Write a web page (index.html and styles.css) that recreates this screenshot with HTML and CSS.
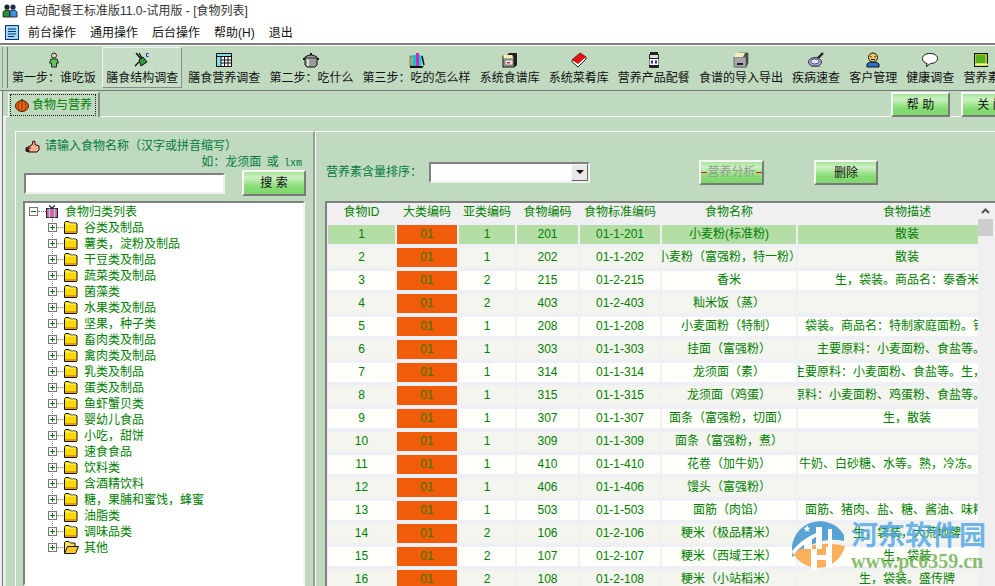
FILE: index.html
```html
<!DOCTYPE html>
<html lang="zh-CN">
<head>
<meta charset="utf-8">
<title>自动配餐王标准版11.0-试用版</title>
<link rel="stylesheet" href="styles.css">
</head>
<body>
<svg class="defs" width="0" height="0" aria-hidden="true">
  <symbol id="folder" viewBox="0 0 15 14"><path d="M1.5 3.5V2.5L2.5 1.5H6L7.5 3H13L14 4V13L13.5 13.5H1.5Z" fill="#ffd800" stroke="#111"/><path d="M2 4H13" stroke="#fff6a0"/><path d="M2 11H13V13H2Z" fill="#e89a00"/></symbol>
  <symbol id="folder-open" viewBox="0 0 16 14"><path d="M1.5 13V2.5L2.5 1.5H6L7.5 3H12V6" fill="#ffe050" stroke="#111"/><path d="M1.5 13.5L4.5 6.5H15.5L12.5 13.5Z" fill="#ffc820" stroke="#111"/></symbol>
  <symbol id="plus" viewBox="0 0 9 9"><rect x=".5" y=".5" width="8" height="8" fill="#fff" stroke="#777"/><path d="M2 4.5H7M4.5 2V7" stroke="#008000"/></symbol>
  <symbol id="minus" viewBox="0 0 9 9"><rect x=".5" y=".5" width="8" height="8" fill="#fff" stroke="#777"/><path d="M2 4.5H7" stroke="#008000"/></symbol>
</svg>
<div class="app">
  <header class="titlebar">
    <svg class="ico16" viewBox="0 0 16 16"><circle cx="5" cy="4" r="2.6" fill="#222"/><circle cx="11" cy="4" r="2.6" fill="#1c2c50"/><path d="M1 14V9L3 7H7L8 9V14Z" fill="#2e8b3d" stroke="#111" stroke-width=".8"/><path d="M8 14V9L9 7H13L15 9V14Z" fill="#3f8fe0" stroke="#111" stroke-width=".8"/></svg>
    <span>自动配餐王标准版11.0-试用版 - [食物列表]</span>
  </header>
  <nav class="menubar">
    <svg class="menu-doc" viewBox="0 0 14 15"><rect x=".5" y=".5" width="13" height="14" fill="#9bd7f5" stroke="#10307a"/><path d="M3 4H11M3 6.5H11M3 9H11M3 11.5H9" stroke="#10307a"/></svg>
    <span>前台操作</span><span>通用操作</span><span>后台操作</span><span>帮助(H)</span><span>退出</span>
  </nav>
  <div class="toolbar">
    <div class="grip"></div>
    <div class="tool tool-first"><svg class="ico16" viewBox="0 0 16 16"><circle cx="8" cy="3.5" r="2.5" fill="#e8d8a0" stroke="#222"/><path d="M5 7H11L12.5 11H10.5V15H5.5V11H3.5Z" fill="#5fc35f" stroke="#222"/></svg><span>第一步：谁吃饭</span></div>
    <div class="tool tool-on"><svg class="ico16" viewBox="0 0 16 16"><path d="M2 1L7 7M5 1L8 6" stroke="#111" stroke-width="1.4"/><path d="M5 8L9 5L13 10L7 14Z" fill="#2f9a3a" stroke="#111"/><path d="M1 14L5 10" stroke="#111" stroke-width="1.4"/><path d="M14.5 1.5H12.5V4.5H14.5" fill="none" stroke="#2233cc"/></svg><span>膳食结构调查</span></div>
    <div class="tool"><svg class="ico16" viewBox="0 0 16 16"><rect x=".5" y="1.5" width="15" height="13" fill="#7fe0e8" stroke="#111"/><rect x="5" y="5" width="10" height="9" fill="#fff"/><path d="M.5 1.5H15.5V4.5H.5ZM5 5V14M8.5 5V14M12 5V14M5 8H15M5 11H15" fill="none" stroke="#111"/></svg><span>膳食营养调查</span></div>
    <div class="tool"><svg class="ico16" viewBox="0 0 16 16"><path d="M2 5Q8 1 14 5V13L12 15H4L2 13Z" fill="#9a9a9a" stroke="#111"/><path d="M2 6H14" stroke="#333"/><path d="M5 7V14" stroke="#ddd" stroke-width="2"/><rect x="7" y="1" width="2" height="2" fill="#111"/><path d="M0 7H2M14 7H16" stroke="#111" stroke-width="2"/></svg><span>第二步：吃什么</span></div>
    <div class="tool"><svg class="ico16" viewBox="0 0 16 16"><path d="M1 14H15L13 16H1Z" fill="#111"/><rect x="1" y="4" width="2" height="10" fill="#d8d860" stroke="#111" stroke-width=".5"/><rect x="4" y="3" width="3" height="11" fill="#00c8d8"/><rect x="7" y="1" width="3" height="13" fill="#e020b0"/><rect x="10" y="3" width="2.500" height="11" fill="#00d8e0"/><path d="M13 4L15 13" stroke="#111" stroke-width="1.500"/></svg><span>第三步：吃的怎么样</span></div>
    <div class="tool"><svg class="ico16" viewBox="0 0 16 16"><path d="M4 4L7 1H15V13L13 15Z" fill="#222"/><rect x="1" y="4" width="11" height="11" fill="#a9a9a0" stroke="#111"/><rect x="1.500" y="3" width="9" height="3" fill="#f4f0b0"/><rect x="3" y="8" width="8" height="5" fill="#e8e8d0" stroke="#333" stroke-width=".5"/><rect x="5" y="10" width="3" height="1.500" fill="#d02080"/></svg><span>系统食谱库</span></div>
    <div class="tool"><svg class="ico16" viewBox="0 0 16 16"><path d="M1 8L9 1L15 5V7L7 15L1 10Z" fill="#fff" stroke="#222"/><path d="M1 8L9 1L15 5L7 12Z" fill="#e01010"/></svg><span>系统菜肴库</span></div>
    <div class="tool"><svg class="ico16" viewBox="0 0 16 16"><rect x="4" y="0" width="8" height="3" fill="#222"/><rect x="3" y="2" width="10" height="14" rx="1" fill="#222"/><rect x="4" y="3" width="8" height="3" fill="#ddd"/><rect x="3.500" y="7" width="9" height="6" fill="#f4f4f4"/><rect x="5" y="8.500" width="2" height="3" fill="#30308a"/><rect x="9" y="8.500" width="2" height="3" fill="#30308a"/></svg><span>营养产品配餐</span></div>
    <div class="tool"><svg class="ico16" viewBox="0 0 16 16"><path d="M3 4L6 1H15V11L13 15H3Z" fill="#555" stroke="#222" stroke-width=".5"/><rect x="1" y="5" width="12" height="10" fill="#a8a8a8" stroke="#444" stroke-width=".6"/><path d="M3 1H12L10 5H1Z" fill="#f4f0c0"/><rect x="4" y="11" width="6" height="2" fill="#222"/></svg><span>食谱的导入导出</span></div>
    <div class="tool"><svg class="ico16" viewBox="0 0 16 16"><path d="M9 7L15 1" stroke="#222" stroke-width="2.400"/><ellipse cx="7" cy="10" rx="6.500" ry="4.500" fill="#a8a8e0" stroke="#334"/><ellipse cx="7" cy="9.500" rx="4" ry="2.500" fill="#e8e8f8" stroke="#556"/><path d="M3 14H12" stroke="#667" stroke-width="1.500"/></svg><span>疾病速查</span></div>
    <div class="tool"><svg class="ico16" viewBox="0 0 16 16"><path d="M2 15V12L5 10H11L14 12V15Z" fill="#2a70d0" stroke="#111"/><circle cx="8" cy="5.500" r="4.500" fill="#f4c860" stroke="#111"/><path d="M6 4V5.500M10 4V5.500M6 7.500H10" stroke="#111"/></svg><span>客户管理</span></div>
    <div class="tool"><svg class="ico16" viewBox="0 0 16 16"><path d="M8 1.500C3.500 1.500 .5 3.500 .5 6.500S3 11 5 11.500L4.500 14.500L8.500 11.500C12.500 11.500 15.500 9.500 15.500 6.500S12.500 1.500 8 1.500Z" fill="#fff" stroke="#111"/></svg><span>健康调查</span></div>
    <div class="tool"><svg class="ico16" viewBox="0 0 16 16"><rect x="1.500" y="1.500" width="13" height="13" fill="#a8c818" stroke="#111"/><rect x="3" y="3" width="9" height="8" fill="#58b020"/><path d="M2 12.500H15" stroke="#f4f0a0" stroke-width="2"/></svg><span>营养素</span></div>
  </div>
  <div class="stage">
    <div class="tabarea">
      <div class="tabstrip">
        <div class="tab"><div class="tab-focus">
          <svg class="pumpkin" viewBox="0 0 14 14"><path d="M7 1V3" stroke="#2b6b1a" stroke-width="2"/><ellipse cx="7" cy="8" rx="6.500" ry="5.500" fill="#e8660e" stroke="#4a2000"/><path d="M7 3V13M4 4Q2 8 4 13M10 4Q12 8 10 13" stroke="#8a3500" fill="none"/></svg>
          <span>食物与营养</span>
        </div></div>
        <button class="gbtn help">帮 助</button>
        <button class="gbtn close">关 闭</button>
      </div>
      <div class="workspace">
        <section class="left">
          <div class="hint"><svg class="hand" viewBox="0 0 15 13"><path d="M1 8L7 5L8 1L10 1.500L10 4.500L14 6V10L12 12H4L1 11Z" fill="#f4b090" stroke="#300"/><path d="M1 8H6M1 11H5" stroke="#300"/><rect x="1" y="8.500" width="3" height="3.500" fill="#222"/></svg><span>请输入食物名称（汉字或拼音缩写）</span></div>
          <div class="hint2">如：龙须面 或 <span class="mono">lxm</span></div>
          <div class="search-row">
            <input class="search-input" type="text" value="">
            <button class="gbtn search">搜 索</button>
          </div>
          <div class="tree">
            <div class="root">
              <svg class="box" viewBox="0 0 9 9"><use href="#minus"/></svg><i class="stub stub-root"></i>
              <svg class="gift" viewBox="0 0 12 13"><rect x=".5" y="3.500" width="11" height="9" fill="#f050a0" stroke="#222"/><path d="M3.500 3.500V12.500M8.500 3.500V12.500" stroke="#80e0e0" stroke-width="1.500"/><path d="M6 3L3 .5M6 3L9 .5" stroke="#222" stroke-width="1.200"/></svg>
              <span>食物归类列表</span>
            </div>
            <div class="node"><svg class="box" viewBox="0 0 9 9"><use href="#plus"/></svg><i class="stub"></i><svg class="folder" viewBox="0 0 15 14"><use href="#folder"/></svg><span>谷类及制品</span></div>
            <div class="node"><svg class="box" viewBox="0 0 9 9"><use href="#plus"/></svg><i class="stub"></i><svg class="folder" viewBox="0 0 15 14"><use href="#folder"/></svg><span>薯类，淀粉及制品</span></div>
            <div class="node"><svg class="box" viewBox="0 0 9 9"><use href="#plus"/></svg><i class="stub"></i><svg class="folder" viewBox="0 0 15 14"><use href="#folder"/></svg><span>干豆类及制品</span></div>
            <div class="node"><svg class="box" viewBox="0 0 9 9"><use href="#plus"/></svg><i class="stub"></i><svg class="folder" viewBox="0 0 15 14"><use href="#folder"/></svg><span>蔬菜类及制品</span></div>
            <div class="node"><svg class="box" viewBox="0 0 9 9"><use href="#plus"/></svg><i class="stub"></i><svg class="folder" viewBox="0 0 15 14"><use href="#folder"/></svg><span>菌藻类</span></div>
            <div class="node"><svg class="box" viewBox="0 0 9 9"><use href="#plus"/></svg><i class="stub"></i><svg class="folder" viewBox="0 0 15 14"><use href="#folder"/></svg><span>水果类及制品</span></div>
            <div class="node"><svg class="box" viewBox="0 0 9 9"><use href="#plus"/></svg><i class="stub"></i><svg class="folder" viewBox="0 0 15 14"><use href="#folder"/></svg><span>坚果，种子类</span></div>
            <div class="node"><svg class="box" viewBox="0 0 9 9"><use href="#plus"/></svg><i class="stub"></i><svg class="folder" viewBox="0 0 15 14"><use href="#folder"/></svg><span>畜肉类及制品</span></div>
            <div class="node"><svg class="box" viewBox="0 0 9 9"><use href="#plus"/></svg><i class="stub"></i><svg class="folder" viewBox="0 0 15 14"><use href="#folder"/></svg><span>禽肉类及制品</span></div>
            <div class="node"><svg class="box" viewBox="0 0 9 9"><use href="#plus"/></svg><i class="stub"></i><svg class="folder" viewBox="0 0 15 14"><use href="#folder"/></svg><span>乳类及制品</span></div>
            <div class="node"><svg class="box" viewBox="0 0 9 9"><use href="#plus"/></svg><i class="stub"></i><svg class="folder" viewBox="0 0 15 14"><use href="#folder"/></svg><span>蛋类及制品</span></div>
            <div class="node"><svg class="box" viewBox="0 0 9 9"><use href="#plus"/></svg><i class="stub"></i><svg class="folder" viewBox="0 0 15 14"><use href="#folder"/></svg><span>鱼虾蟹贝类</span></div>
            <div class="node"><svg class="box" viewBox="0 0 9 9"><use href="#plus"/></svg><i class="stub"></i><svg class="folder" viewBox="0 0 15 14"><use href="#folder"/></svg><span>婴幼儿食品</span></div>
            <div class="node"><svg class="box" viewBox="0 0 9 9"><use href="#plus"/></svg><i class="stub"></i><svg class="folder" viewBox="0 0 15 14"><use href="#folder"/></svg><span>小吃，甜饼</span></div>
            <div class="node"><svg class="box" viewBox="0 0 9 9"><use href="#plus"/></svg><i class="stub"></i><svg class="folder" viewBox="0 0 15 14"><use href="#folder"/></svg><span>速食食品</span></div>
            <div class="node"><svg class="box" viewBox="0 0 9 9"><use href="#plus"/></svg><i class="stub"></i><svg class="folder" viewBox="0 0 15 14"><use href="#folder"/></svg><span>饮料类</span></div>
            <div class="node"><svg class="box" viewBox="0 0 9 9"><use href="#plus"/></svg><i class="stub"></i><svg class="folder" viewBox="0 0 15 14"><use href="#folder"/></svg><span>含酒精饮料</span></div>
            <div class="node"><svg class="box" viewBox="0 0 9 9"><use href="#plus"/></svg><i class="stub"></i><svg class="folder" viewBox="0 0 15 14"><use href="#folder"/></svg><span>糖，果脯和蜜饯，蜂蜜</span></div>
            <div class="node"><svg class="box" viewBox="0 0 9 9"><use href="#plus"/></svg><i class="stub"></i><svg class="folder" viewBox="0 0 15 14"><use href="#folder"/></svg><span>油脂类</span></div>
            <div class="node"><svg class="box" viewBox="0 0 9 9"><use href="#plus"/></svg><i class="stub"></i><svg class="folder" viewBox="0 0 15 14"><use href="#folder"/></svg><span>调味品类</span></div>
            <div class="node node-last"><svg class="box" viewBox="0 0 9 9"><use href="#plus"/></svg><i class="stub"></i><svg class="folder-o" viewBox="0 0 16 14"><use href="#folder-open"/></svg><span>其他</span></div>
          </div>
        </section>
        <section class="right">
          <div class="controls">
            <label class="sort-label">营养素含量排序：</label>
            <div class="combo"><div class="combo-arrow"><i></i></div></div>
            <button class="gbtn analyse" disabled>营养分析</button>
            <button class="gbtn del">删除</button>
          </div>
          <div class="table-wrap">
            <div class="grid-view">
              <div class="grid">
                <div class="row head"><div>食物ID</div><div>大类编码</div><div>亚类编码</div><div>食物编码</div><div>食物标准编码</div><div>食物名称</div><div>食物描述</div></div>
                <div class="row sel"><div>1</div><div class="cat">01</div><div>1</div><div>201</div><div>01-1-201</div><div>小麦粉(标准粉)</div><div>散装</div></div>
                <div class="row alt"><div>2</div><div class="cat">01</div><div>1</div><div>202</div><div>01-1-202</div><div><span>小麦粉（富强粉，特一粉）</span></div><div>散装</div></div>
                <div class="row"><div>3</div><div class="cat">01</div><div>2</div><div>215</div><div>01-2-215</div><div>香米</div><div><span>生，袋装。商品名：泰香米</span></div></div>
                <div class="row alt"><div>4</div><div class="cat">01</div><div>2</div><div>403</div><div>01-2-403</div><div>籼米饭（蒸）</div><div></div></div>
                <div class="row"><div>5</div><div class="cat">01</div><div>1</div><div>208</div><div>01-1-208</div><div>小麦面粉（特制）</div><div><span>袋装。商品名：特制家庭面粉。钱塘牌</span></div></div>
                <div class="row alt"><div>6</div><div class="cat">01</div><div>1</div><div>303</div><div>01-1-303</div><div>挂面（富强粉）</div><div><span>主要原料：小麦面粉、食盐等。生</span></div></div>
                <div class="row"><div>7</div><div class="cat">01</div><div>1</div><div>314</div><div>01-1-314</div><div>龙须面（素）</div><div><span>主要原料：小麦面粉、食盐等。生，袋装。</span></div></div>
                <div class="row alt"><div>8</div><div class="cat">01</div><div>1</div><div>315</div><div>01-1-315</div><div>龙须面（鸡蛋）</div><div><span>主要原料：小麦面粉、鸡蛋粉、食盐等。生，袋装。</span></div></div>
                <div class="row"><div>9</div><div class="cat">01</div><div>1</div><div>307</div><div>01-1-307</div><div>面条（富强粉，切面）</div><div>生，散装</div></div>
                <div class="row alt"><div>10</div><div class="cat">01</div><div>1</div><div>309</div><div>01-1-309</div><div>面条（富强粉，煮）</div><div></div></div>
                <div class="row"><div>11</div><div class="cat">01</div><div>1</div><div>410</div><div>01-1-410</div><div>花卷（加牛奶）</div><div><span>牛奶、白砂糖、水等。熟，冷冻。散装。</span></div></div>
                <div class="row alt"><div>12</div><div class="cat">01</div><div>1</div><div>406</div><div>01-1-406</div><div>馒头（富强粉）</div><div></div></div>
                <div class="row"><div>13</div><div class="cat">01</div><div>1</div><div>503</div><div>01-1-503</div><div>面筋（肉馅）</div><div><span>主要原料：面筋、猪肉、盐、糖、酱油、味精等。熟，冷冻。</span></div></div>
                <div class="row alt"><div>14</div><div class="cat">01</div><div>2</div><div>106</div><div>01-2-106</div><div>粳米（极品精米）</div><div>生，袋装，大荒地牌</div></div>
                <div class="row"><div>15</div><div class="cat">01</div><div>2</div><div>107</div><div>01-2-107</div><div>粳米（西域王米）</div><div>生，袋装</div></div>
                <div class="row alt"><div>16</div><div class="cat">01</div><div>2</div><div>108</div><div>01-2-108</div><div>粳米（小站稻米）</div><div>生，袋装。盛传牌</div></div>
              </div>
            </div>
            <div class="scrollbar">
              <div class="sb-up"><svg width="9" height="6" viewBox="0 0 9 6"><path d="M1 5L4.500 1.500L8 5" fill="none" stroke="#555" stroke-width="2"/></svg></div>
              <div class="sb-thumb"></div>
            </div>
          </div>
        </section>
      </div>
    </div>
  </div>
  <div class="watermark">
    <svg class="wm-logo" viewBox="0 0 56 56">
      <path d="M2 32A28 28 0 0 1 54 20L54 26Q30 20 2 42Z" fill="#4b9bd2"/>
      <path d="M3 38Q28 24 55 31A28 28 0 0 1 3 38Z" fill="#f9a94f"/>
      <path d="M2 36Q12 24 26 18V22Q14 28 3 40Z" fill="#fff"/>
      <path d="M14 28L22 20V34H14ZM26 12H32V34H26ZM38 14H42V32H38Z" fill="#fff"/>
      <path d="M21 34H27V56H21ZM36 32H42V53H36ZM24 40H38V45H24Z" fill="#fff"/>
      <path d="M17 10L18 12.500L20.500 13L18.500 14.500L19 17L17 15.500L15 17L15.500 14.500L13.500 13L16 12.500Z" fill="#fff"/>
    </svg>
    <div class="wm-text">
      <div class="wm-cn">河东软件园</div>
      <div class="wm-url">www.pc0359.cn</div>
    </div>
  </div>
</div>
</body>
</html>
```

FILE: styles.css
```css
* { box-sizing: border-box; }
html, body { margin: 0; padding: 0; }
body {
  width: 995px;
  height: 586px;
  overflow: hidden;
  background: #c0dac0;
  font: 12px/14px "Liberation Sans", "Noto Sans CJK SC", sans-serif;
  color: #111;
}
.defs { position: absolute; }
.app {
  position: relative;
  display: flex;
  flex-direction: column;
  width: 995px;
  height: 586px;
  overflow: hidden;
}
.ico16 { width: 16px; height: 16px; display: block; flex: none; }

.titlebar {
  flex: none;
  height: 22px;
  background: #fff;
  display: flex;
  align-items: center;
  padding-left: 2px;
  gap: 6px;
  color: #333;
}
.menubar {
  flex: none;
  height: 21px;
  background: #fff;
  display: flex;
  align-items: center;
  padding-left: 5px;
  gap: 14px;
  color: #111;
}
.menu-doc { width: 14px; height: 15px; margin-right: -5px; }

.toolbar {
  flex: none;
  height: 48px;
  display: flex;
  align-items: flex-start;
  gap: 9.1px;
  padding: 2px 0 0 2px;
  background: #c0dac0;
  border-top: 2px solid #7e7e7e;
  box-shadow: inset 0 1px 0 #fff;
  border-bottom: 1px solid #777;
  overflow: hidden;
  white-space: nowrap;
}
.grip {
  flex: none;
  width: 6px;
  height: 41px;
  margin-right: -6px;
  border-left: 1px solid #9a9a9a;
  border-right: 1px solid #777;
}
.tool {
  flex: none;
  height: 41px;
  border: 1px solid transparent;
  padding-top: 4px;
  display: flex;
  flex-direction: column;
  align-items: center;
  gap: 3px;
  margin: 0 -1px;
}
.tool-first { margin-left: 0; }
.tool-on {
  padding-left: 3px;
  padding-right: 3px;
  margin: 0 -3px;
  background: #c6dec6;
  border-color: #f4f4f4 #8a8a8a #8a8a8a #f4f4f4;
}

.stage { flex: 1; min-height: 0; display: flex; background: #e9eee9; padding-left: 2px; }
.tabarea {
  flex: 1;
  min-width: 0;
  display: flex;
  flex-direction: column;
  border-left: 1px solid #777;
  background: #c0dac0;
}
.tabstrip {
  flex: none;
  height: 26px;
  display: flex;
  align-items: flex-start;
  padding: 1px 0 0 5px;
  border-bottom: 1px solid #fff;
}
.tab {
  flex: none;
  width: 92px;
  height: 25px;
  padding: 1px 2px 1px 1px;
  background: #c0dac0;
  border-top: 1px solid #e8f0e8;
  border-left: 1px solid #f4f4f4;
  border-right: 2px solid #888;
  position: relative;
  z-index: 1;
}
.tab-focus {
  height: 100%;
  border: 1px dotted #222;
  display: flex;
  align-items: center;
  padding-left: 4px;
  gap: 3px;
  color: #008000;
}
.pumpkin { width: 14px; height: 14px; flex: none; }

.gbtn {
  font: 12px/14px "Liberation Sans", "Noto Sans CJK SC", sans-serif;
  color: #111;
  padding: 0;
  border: 2px solid;
  border-color: #f6f6f6 #7a7a7a #7a7a7a #f6f6f6;
  background: linear-gradient(#a7e59b 0, #cdf0c4 25%, #a4e696 48%, #84dc73 70%, #7ed66c 100%);
}
.help { width: 59px; height: 25px; margin-left: auto; }
.close { width: 60px; height: 25px; margin-left: 11px; margin-right: -26px; flex: none; }

.workspace {
  flex: 1;
  min-height: 0;
  display: flex;
  padding: 14px 0 0 9px;
  border-left: 3px solid #ececec;
}
.left {
  flex: none;
  width: 300px;
  display: flex;
  flex-direction: column;
  padding: 7px 8px 0 7px;
  border-top: 1px solid #fff;
  border-left: 1px solid #fff;
  border-right: 2px solid #9d9d9d;
  color: #007a3a;
}
.hint { display: flex; align-items: center; gap: 5px; height: 14px; margin-left: 2px; }
.hand { width: 15px; height: 13px; flex: none; }
.hint2 { text-align: right; height: 14px; margin: 2px 3px 0 0; word-spacing: 2px; }
.mono { font: 10px/14px "Liberation Mono", monospace; }
.search-row { display: flex; align-items: center; height: 26px; margin: 1px -1px 0 1px; gap: 17px; }
.search-input {
  width: 201px;
  height: 21px;
  padding: 0;
  background: #fff;
  border: 2px solid;
  border-color: #808080 #f0f0f0 #f0f0f0 #808080;
  outline: none;
}
.search { flex: none; width: 64px; height: 26px; }
.tree {
  flex: 1;
  min-height: 0;
  margin-top: 5px;
  background: #fff;
  border: 2px solid;
  border-color: #808080 #f4f4f4 transparent #808080;
  color: #008000;
  overflow: hidden;
}
.root, .node {
  display: flex;
  align-items: center;
  height: 16px;
  line-height: 16px;
  white-space: nowrap;
}
.root > span, .node > span { margin-top: 2px; }
.root { padding-left: 4px; }
.node {
  padding-left: 23px;
  background: repeating-linear-gradient(#808080 0 1px, transparent 1px 2px) 27px 0 / 1px 100% no-repeat;
}
.node-last { background-size: 1px 8px; }
.box { width: 9px; height: 9px; flex: none; display: block; }
.stub { flex: none; width: 6px; border-top: 1px dotted #808080; }
.stub-root { width: 8px; }
.gift { width: 12px; height: 13px; flex: none; margin-right: 7px; }
.folder { width: 15px; height: 14px; flex: none; margin-right: 6px; }
.folder-o { width: 16px; height: 14px; flex: none; margin-right: 5px; }

.right {
  flex: 1;
  min-width: 0;
  display: flex;
  flex-direction: column;
  border-top: 1px solid #fff;
  border-left: 1px solid #fff;
}
.controls {
  flex: none;
  height: 69px;
  padding: 27px 0 16px 10px;
  display: flex;
  align-items: center;
}
.sort-label { width: 103px; flex: none; color: #007a3a; }
.combo {
  flex: none;
  width: 161px;
  height: 21px;
  background: #fff;
  border: 2px solid;
  border-color: #808080 #f0f0f0 #f0f0f0 #808080;
  display: flex;
  justify-content: flex-end;
}
.combo-arrow {
  width: 17px;
  height: 17px;
  background: #e8e8e8;
  border: 1px solid;
  border-color: #f8f8f8 #666 #666 #f8f8f8;
  display: flex;
  align-items: center;
  justify-content: center;
}
.combo-arrow i {
  width: 0;
  height: 0;
  border: 4px solid transparent;
  border-top: 4px solid #111;
  border-bottom: 0;
}
.analyse {
  flex: none;
  width: 65px;
  height: 25px;
  margin-left: 109px;
  color: #999;
  display: flex;
  align-items: center;
  justify-content: center;
}
.analyse::before, .analyse::after {
  content: "";
  width: 6px;
  height: 1px;
  background: #e81010;
  flex: none;
}
.del { flex: none; width: 64px; height: 25px; margin-left: 50px; margin-top: 1px; }

.table-wrap {
  flex: 1;
  min-height: 0;
  margin-left: 9px;
  display: flex;
  border-top: 2px solid #808080;
  border-left: 2px solid #808080;
  background: #fff;
}
.grid-view { flex: 1; min-width: 0; overflow: hidden; background: #eff0f5; padding-left: 1px; }
.grid {
  display: grid;
  grid-template-columns: 67px 60px 56px 61px 80px 134px 218px;
  grid-template-rows: 18px;
  grid-auto-rows: 19px;
  column-gap: 2px;
  row-gap: 4px;
  color: #008000;
}
.row { display: contents; }
.row > div {
  background: #fffffb;
  display: flex;
  align-items: center;
  justify-content: center;
  white-space: nowrap;
  overflow: hidden;
  min-width: 0;
  padding-bottom: 2px;
}
.row > div > span { flex: none; }
.head > div { background: #f0f0f0; padding-bottom: 0; }
.alt > div { background: #f5f5ef; }
.sel > div { background: #b4dea6; }
.row > .cat { background: #f05c0a; color: #2f7a00; }
.scrollbar { flex: none; width: 17px; background: #f0f0f0; }
.sb-up { height: 16px; display: flex; align-items: center; justify-content: center; padding-right: 2px; }
.sb-thumb { width: 15px; height: 17px; background: #cdcdcd; }

.watermark {
  position: absolute;
  left: 790px;
  top: 515px;
  display: flex;
  gap: 5px;
  pointer-events: none;
}
.wm-logo { width: 56px; height: 56px; flex: none; opacity: .92; }
.wm-text { padding-top: 4px; }
.wm-cn {
  font: 700 27px/30px "Noto Sans CJK SC", sans-serif;
  color: #4ea6e6;
  opacity: .8;
  white-space: nowrap;
}
.wm-url {
  font: 700 20px/20px "Liberation Serif", serif;
  color: #6fae4e;
  opacity: .8;
  margin-top: 2px;
  white-space: nowrap;
}
```
